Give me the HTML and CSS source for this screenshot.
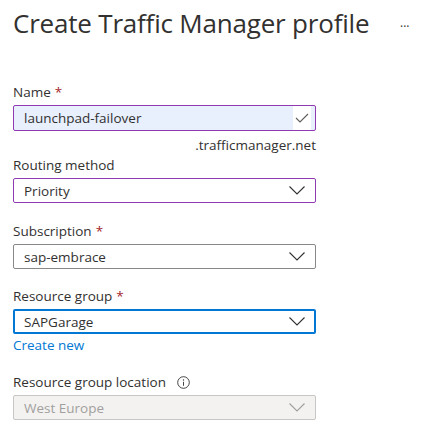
FILE: index.html
```html
<!DOCTYPE html>
<html>
<head>
<meta charset="utf-8">
<link rel="stylesheet" href="styles.css">
</head>
<body>
<div class="page">
  <div class="header">
    <h1 class="title">Create Traffic Manager profile</h1>
    <span class="more">···</span>
  </div>
  <form class="form">
    <div class="field field-name">
      <label class="label">Name <span class="req">*</span></label>
      <div class="box box-purple box-filled box-tall">
        <span class="value">launchpad-failover</span>
        <span class="check-wrap"><svg class="check" width="14" height="10" viewBox="0 0 14 10"><path d="M1 5 L5 9 L13 1" fill="none" stroke="#605e5c" stroke-width="1.1"/></svg></span>
      </div>
      <div class="suffix">.trafficmanager.net</div>
    </div>
    <div class="field">
      <label class="label">Routing method</label>
      <div class="box box-purple">
        <span class="value">Priority</span>
        <svg class="chev" width="16" height="9" viewBox="0 0 16 9"><path d="M0.5 0.5 L8 8 L15.5 0.5" fill="none" stroke="#323130" stroke-width="1.1"/></svg>
      </div>
    </div>
    <div class="field field-sub">
      <label class="label">Subscription <span class="req">*</span></label>
      <div class="box">
        <span class="value">sap-embrace</span>
        <svg class="chev" width="16" height="9" viewBox="0 0 16 9"><path d="M0.5 0.5 L8 8 L15.5 0.5" fill="none" stroke="#323130" stroke-width="1.1"/></svg>
      </div>
    </div>
    <div class="field field-rg">
      <label class="label">Resource group <span class="req">*</span></label>
      <div class="box box-blue">
        <span class="value">SAPGarage</span>
        <svg class="chev" width="16" height="9" viewBox="0 0 16 9"><path d="M0.5 0.5 L8 8 L15.5 0.5" fill="none" stroke="#323130" stroke-width="1.1"/></svg>
      </div>
      <a class="link">Create new</a>
    </div>
    <div class="field">
      <label class="label">Resource group location <svg class="info" width="13" height="13" viewBox="0 0 13 13"><circle cx="6.5" cy="6.5" r="5.8" fill="none" stroke="#323130" stroke-width="0.9"/><circle cx="6.5" cy="4" r="0.7" fill="#323130"/><path d="M6.5 5.8 V9.8" stroke="#323130" stroke-width="0.9"/></svg></label>
      <div class="box box-disabled">
        <span class="value">West Europe</span>
        <svg class="chev" width="16" height="9" viewBox="0 0 16 9"><path d="M0.5 0.5 L8 8 L15.5 0.5" fill="none" stroke="#a19f9d" stroke-width="1.1"/></svg>
      </div>
    </div>
  </form>
</div>
</body>
</html>
```
FILE: styles.css
```css
* { box-sizing: border-box; }
body {
  margin: 0;
  background: #ffffff;
  font-family: "Open Sans", "Noto Sans", sans-serif;
  color: #323130;
}
.page {
  padding: 0 0 0 13px;
  width: 445px;
}
.header {
  display: flex;
  align-items: center;
  height: 46px;
}
.title {
  margin: 0;
  font-weight: 400;
  font-size: 26px;
  letter-spacing: -0.2px;
  color: #323130;
  width: 387px;
  white-space: nowrap;
}
.more {
  font-size: 12px;
  color: #323130;
  position: relative;
  top: 3px;
}
.form {
  width: 303px;
  display: flex;
  flex-direction: column;
  padding-top: 37px;
}
.field {
  display: flex;
  flex-direction: column;
  margin-bottom: 19px;
}
.field-name { margin-bottom: 2px; }
.field-sub { margin-bottom: 18px; }
.field-rg { margin-bottom: 19px; }
.label {
  font-size: 13.5px;
  line-height: 18px;
  height: 18px;
  margin-bottom: 4px;
  display: flex;
  align-items: center;
  gap: 4px;
  color: #323130;
}
.req { color: #a4262c; }
.info { margin-left: 7px; }
.box {
  height: 25px;
  border: 1px solid #8a8886;
  border-radius: 2px;
  display: flex;
  align-items: center;
  justify-content: space-between;
  padding: 0 10px 0 10px;
  font-size: 13.5px;
  background: #fff;
}
.box-tall { height: 26px; }
.box-purple { border-color: #8f3ab1; }
.box-filled { background: #e8f0fe; }
.box-blue { border: 2px solid #0078d4; padding-left: 9px; padding-right: 9px; }
.box-disabled { background: #f3f2f1; border-color: #c8c6c4; color: #a19f9d; }
.value { line-height: 18px; }
.check-wrap {
  background: #fff;
  height: 24px;
  display: flex;
  align-items: center;
  padding: 0 2px;
  margin-right: -6px;
}
.suffix {
  align-self: flex-end;
  font-size: 13.5px;
  line-height: 18px;
  margin-top: 5px;
}
.link {
  font-size: 13.5px;
  color: #0078d4;
  line-height: 18px;
  margin-top: 2px;
}
```
